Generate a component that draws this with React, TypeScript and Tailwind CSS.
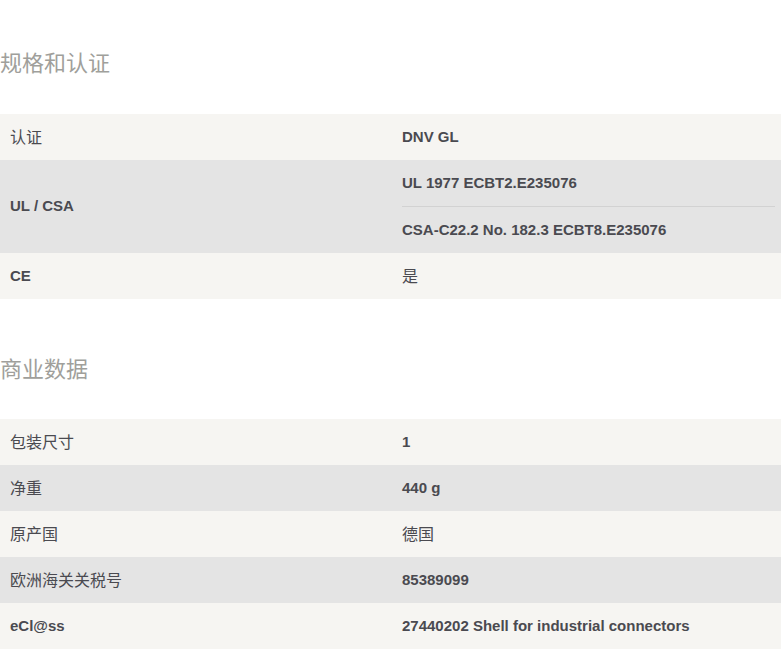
import React from "react";

const font = { fontFamily: '"Liberation Sans", "Noto Sans CJK SC", sans-serif' };

type Row = { label: string; values: string[] };

const certRows: Row[] = [
  { label: "认证", values: ["DNV GL"] },
  { label: "UL / CSA", values: ["UL 1977 ECBT2.E235076", "CSA-C22.2 No. 182.3 ECBT8.E235076"] },
  { label: "CE", values: ["是"] },
];

const commRows: Row[] = [
  { label: "包装尺寸", values: ["1"] },
  { label: "净重", values: ["440 g"] },
  { label: "原产国", values: ["德国"] },
  { label: "欧洲海关关税号", values: ["85389099"] },
  { label: "eCl@ss", values: ["27440202 Shell for industrial connectors"] },
];

const isCjk = (s: string) => /[\u4e00-\u9fff]/.test(s);

function Cell({ text }: { text: string }) {
  return isCjk(text) ? (
    <span
      className="text-[16px] leading-[16px] font-normal text-[#4a4a50] -mt-[2px]"
      style={{ fontFamily: '"Noto Sans CJK SC", sans-serif' }}
    >
      {text}
    </span>
  ) : (
    <span className="text-[15px] font-bold text-[#4a4a50]">{text}</span>
  );
}

function Table({ rows }: { rows: Row[] }) {
  return (
    <div className="flex flex-col">
      {rows.map((r, i) => (
        <div
          key={i}
          className={`flex items-center ${i % 2 === 0 ? "bg-[#f6f5f2]" : "bg-[#e4e4e4]"}`}
        >
          <div className="w-[402px] pl-[10px] flex items-center">
            <Cell text={r.label} />
          </div>
          <div className="flex-1 pr-[6px] flex flex-col">
            {r.values.map((v, j) => (
              <div
                key={j}
                className={`flex items-center ${
                  j > 0 ? "h-[47px] border-t border-[#d2d2d2]" : "h-[46px]"
                }`}
              >
                <Cell text={v} />
              </div>
            ))}
          </div>
        </div>
      ))}
    </div>
  );
}

export default function App() {
  return (
    <div className="w-[781px] h-[651px] bg-white overflow-hidden" style={font}>
      <h2
        className="pt-[46px] pb-[38px] h-[114px] leading-[30px] text-[22px] font-normal text-[#a09f9b]"
        style={{ fontFamily: '"Noto Sans CJK SC", sans-serif' }}
      >
        规格和认证
      </h2>
      <Table rows={certRows} />
      <h2
        className="pt-[53px] pb-[37px] h-[120px] leading-[30px] text-[22px] font-normal text-[#a09f9b]"
        style={{ fontFamily: '"Noto Sans CJK SC", sans-serif' }}
      >
        商业数据
      </h2>
      <Table rows={commRows} />
    </div>
  );
}
